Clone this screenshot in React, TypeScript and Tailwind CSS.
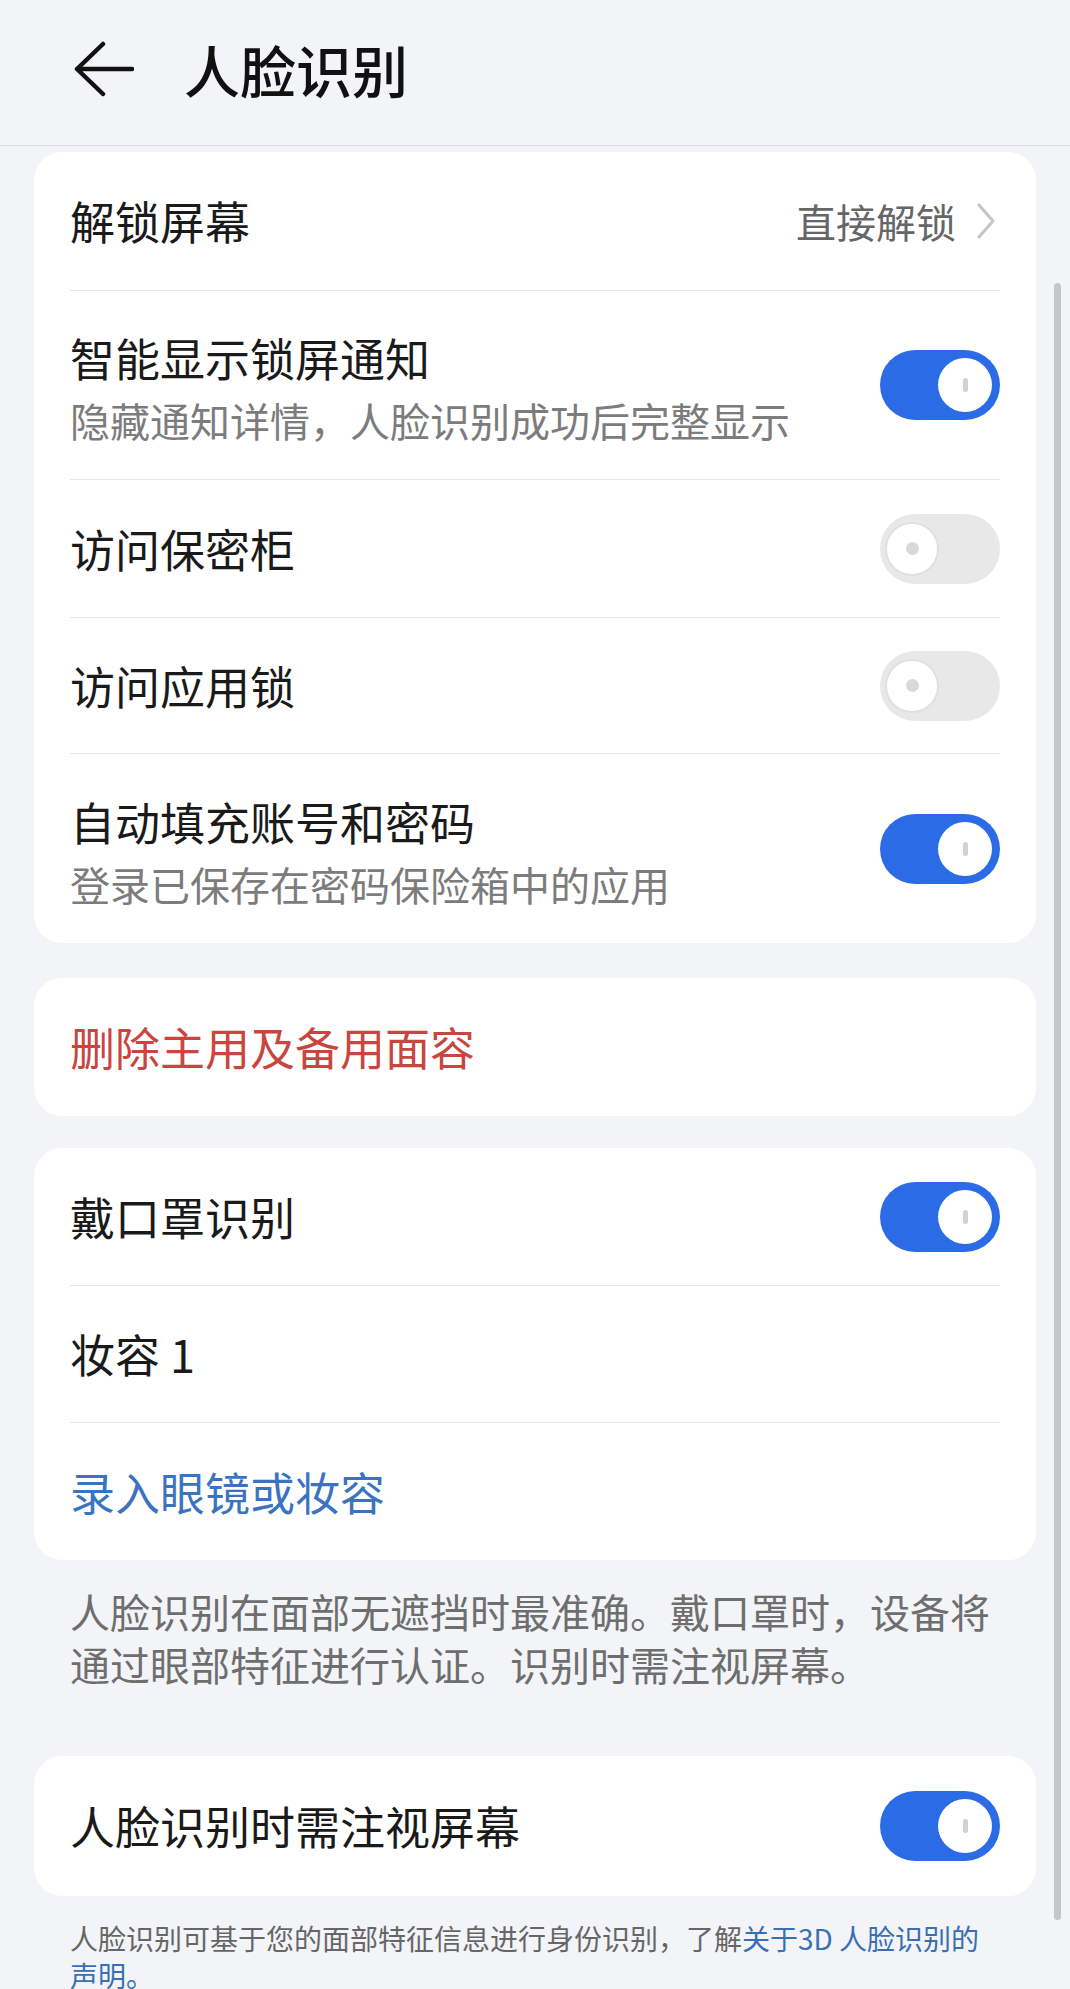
import React from "react";

function Toggle({ on }: { on: boolean }) {
  if (on) {
    return (
      <div className="w-[120px] h-[70px] rounded-full bg-[#2b6ce6] flex items-center justify-end pr-[8px] shrink-0">
        <div className="w-[54px] h-[54px] rounded-full bg-white flex items-center justify-center">
          <div className="w-[5px] h-[14px] rounded-full bg-[#d2d2d2]" />
        </div>
      </div>
    );
  }
  return (
    <div className="w-[120px] h-[70px] rounded-full bg-[#e8e8e8] flex items-center justify-start pl-[5px] shrink-0">
      <div className="w-[54px] h-[54px] rounded-full bg-white border-2 border-[#e0e0e0] flex items-center justify-center">
        <div className="w-[13px] h-[13px] rounded-full bg-[#d9d9d9]" />
      </div>
    </div>
  );
}

function SingleRow({
  title,
  on,
  divider = true,
  h = "h-[138px]",
}: {
  title: string;
  on: boolean;
  divider?: boolean;
  h?: string;
}) {
  return (
    <div
      className={`${h} flex items-center justify-between ${
        divider ? "border-b border-[#e6e6e6]" : ""
      }`}
    >
      <span className="text-[45px] leading-[56px] text-[#1a1a1a]">{title}</span>
      <Toggle on={on} />
    </div>
  );
}

function DoubleRow({
  title,
  sub,
  on,
  divider = true,
}: {
  title: string;
  sub: string;
  on: boolean;
  divider?: boolean;
}) {
  return (
    <div
      className={`h-[189px] flex items-center justify-between ${
        divider ? "border-b border-[#e6e6e6]" : ""
      }`}
    >
      <div className="flex flex-col pt-[6px]">
        <span className="text-[45px] leading-[56px] text-[#1a1a1a]">{title}</span>
        <span className="mt-[8px] text-[40px] leading-[52px] text-[#7c7c7c]">{sub}</span>
      </div>
      <Toggle on={on} />
    </div>
  );
}

export default function App() {
  return (
    <div className="w-[1070px] h-[1989px] bg-[#f2f4f7] relative overflow-hidden font-['Noto_Sans_CJK_SC','Noto_Sans',sans-serif]">
      {/* Header */}
      <div className="h-[146px] border-b border-[#dcdde1] flex items-center pl-[74px] pb-[8px]">
        <svg width="60" height="56" viewBox="0 0 60 56" fill="none">
          <path
            d="M29 3 L3 28 L29 53 M3 28 H58"
            stroke="#111"
            strokeWidth="4.5"
            strokeLinecap="round"
            strokeLinejoin="round"
          />
        </svg>
        <span className="ml-[50px] text-[56px] leading-[70px] font-medium text-[#111]">人脸识别</span>
      </div>

      <div className="px-[34px] pt-[6px] flex flex-col">
        {/* Card 1 */}
        <div className="rounded-[28px] bg-white pl-[36px] pr-[36px]">
          <div className="h-[139px] flex items-center justify-between border-b border-[#e6e6e6]">
            <span className="text-[45px] leading-[56px] text-[#1a1a1a]">解锁屏幕</span>
            <div className="flex items-center">
              <span className="text-[40px] leading-[52px] text-[#666666]">直接解锁</span>
              <svg className="ml-[20px] mr-[4px]" width="20" height="38" viewBox="0 0 20 38" fill="none">
                <path d="M3 3 L17 19 L3 35" stroke="#c6c6c6" strokeWidth="3" strokeLinecap="round" strokeLinejoin="round" />
              </svg>
            </div>
          </div>
          <DoubleRow title="智能显示锁屏通知" sub="隐藏通知详情，人脸识别成功后完整显示" on={true} />
          <SingleRow title="访问保密柜" on={false} />
          <SingleRow title="访问应用锁" on={false} h="h-[136px]" />
          <DoubleRow title="自动填充账号和密码" sub="登录已保存在密码保险箱中的应用" on={true} divider={false} />
        </div>

        {/* Card 2 */}
        <div className="mt-[35px] h-[138px] rounded-[28px] bg-white px-[36px] flex items-center">
          <span className="text-[45px] leading-[56px] text-[#c9463f]">删除主用及备用面容</span>
        </div>

        {/* Card 3 */}
        <div className="mt-[32px] rounded-[28px] bg-white px-[36px]">
          <SingleRow title="戴口罩识别" on={true} />
          <div className="h-[137px] flex items-center border-b border-[#e6e6e6]">
            <span className="text-[45px] leading-[56px] text-[#1a1a1a]">妆容 1</span>
          </div>
          <div className="h-[137px] flex items-center">
            <span className="text-[45px] leading-[56px] text-[#3a74c0]">录入眼镜或妆容</span>
          </div>
        </div>

        {/* Description */}
        <div className="px-[36px] pt-[25px] pb-[65px] text-[40px] leading-[53px] text-[#6e6e6e]">
          人脸识别在面部无遮挡时最准确。戴口罩时，设备将通过眼部特征进行认证。识别时需注视屏幕。
        </div>

        {/* Card 4 */}
        <div className="h-[140px] rounded-[28px] bg-white px-[36px] flex items-center justify-between">
          <span className="text-[45px] leading-[56px] text-[#1a1a1a]">人脸识别时需注视屏幕</span>
          <Toggle on={true} />
        </div>

        {/* Footer */}
        <p className="px-[36px] pt-[24px] text-[28px] leading-[37px] text-[#666666]">
          人脸识别可基于您的面部特征信息进行身份识别，了解<span className="text-[#3a6fb4]">关于3D 人脸识别的声明。</span>
        </p>
      </div>

      {/* Scroll indicator */}
      <div className="absolute right-[9px] top-[283px] w-[7px] h-[1637px] rounded-full bg-[#c6c6ca]" />
    </div>
  );
}
